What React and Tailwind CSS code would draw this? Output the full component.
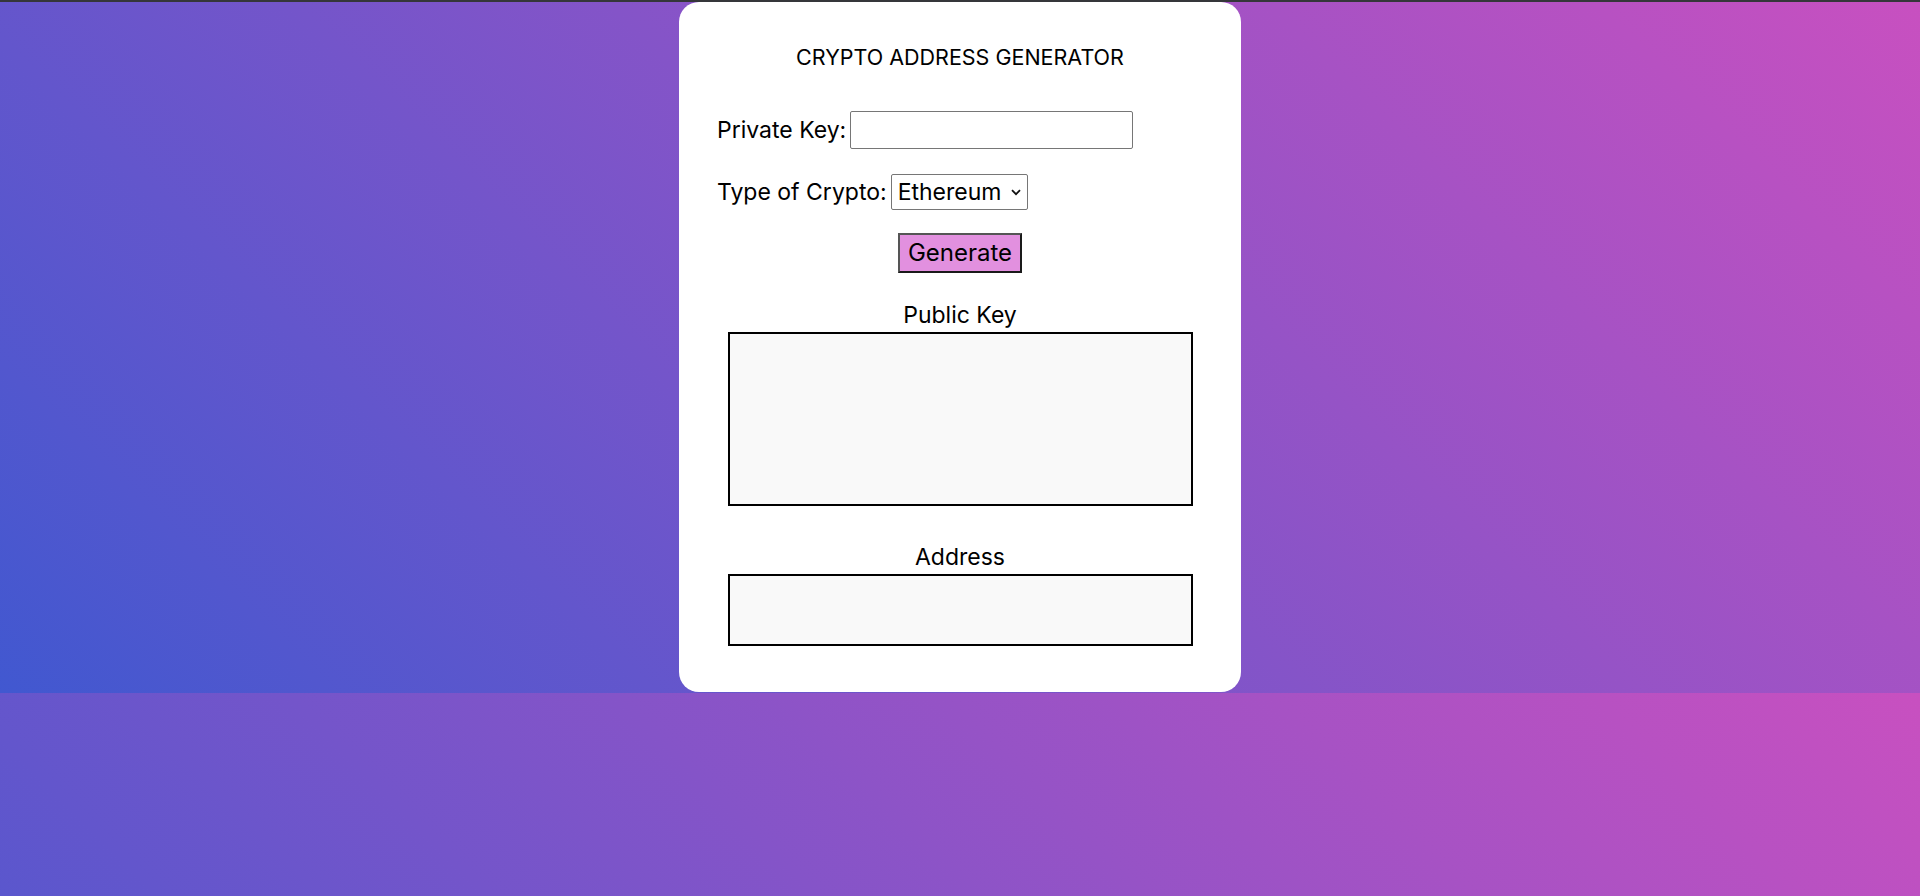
import { useState } from "react";

export default function App() {
  const [privateKey, setPrivateKey] = useState("");
  const [crypto, setCrypto] = useState("ethereum");

  return (
    <div className="h-screen bg-[linear-gradient(45deg,#4158d0,#c850c0)] bg-[length:100%_693px] bg-repeat-y font-['Inter',sans-serif] text-black">
      <div className="h-[2px] bg-[#35363a]" />

      <div className="mx-auto w-[562px] h-[690px] bg-white rounded-[20px] px-[38px] pt-[40px]">
        {/* Title */}
        <h1 className="text-center text-[21.5px] leading-[30px] font-normal">
          CRYPTO ADDRESS GENERATOR
        </h1>

        {/* Private key */}
        <div className="mt-[39px] flex items-center h-[38px]">
          <label className="text-[23px] leading-[30px]">Private Key:</label>
          <input
            type="text"
            value={privateKey}
            onChange={(e) => setPrivateKey(e.target.value)}
            className="ml-[4px] w-[283px] h-[38px] border border-[#767676] rounded-[2px] px-2 text-[16px] outline-none"
          />
        </div>

        {/* Crypto type */}
        <div className="mt-[25px] flex items-center h-[36px]">
          <label className="text-[23px] leading-[30px]">Type of Crypto:</label>
          <div className="relative ml-[4px]">
            <select
              value={crypto}
              onChange={(e) => setCrypto(e.target.value)}
              className="appearance-none w-[137px] h-[36px] border border-[#767676] rounded-[2px] pl-[6px] text-[23px] leading-[30px] bg-white outline-none"
            >
              <option value="ethereum">Ethereum</option>
              <option value="bitcoin">Bitcoin</option>
            </select>
            <svg
              className="absolute right-[7px] top-[15px] pointer-events-none"
              width="10"
              height="7"
              viewBox="0 0 10 7"
              fill="none"
            >
              <path d="M1 1.2l4 4 4-4" stroke="#111" strokeWidth="1.8" />
            </svg>
          </div>
        </div>

        {/* Generate */}
        <div className="mt-[23px] flex justify-center">
          <button className="w-[124px] h-[40px] bg-[#e290df] border-2 border-t-[#555] border-l-[#555] border-r-[#1a1a1a] border-b-[#1a1a1a] text-[24px] leading-[30px]">
            Generate
          </button>
        </div>

        {/* Public key */}
        <p className="mt-[27px] text-center text-[23px] leading-[30px]">
          Public Key
        </p>
        <div className="mt-[2px] mx-auto w-[465px] h-[174px] border-2 border-black bg-[#f9f9f9]" />

        {/* Address */}
        <p className="mt-[36px] text-center text-[23px] leading-[30px]">
          Address
        </p>
        <div className="mt-[2px] mx-auto w-[465px] h-[72px] border-2 border-black bg-[#f9f9f9]" />
      </div>
    </div>
  );
}
